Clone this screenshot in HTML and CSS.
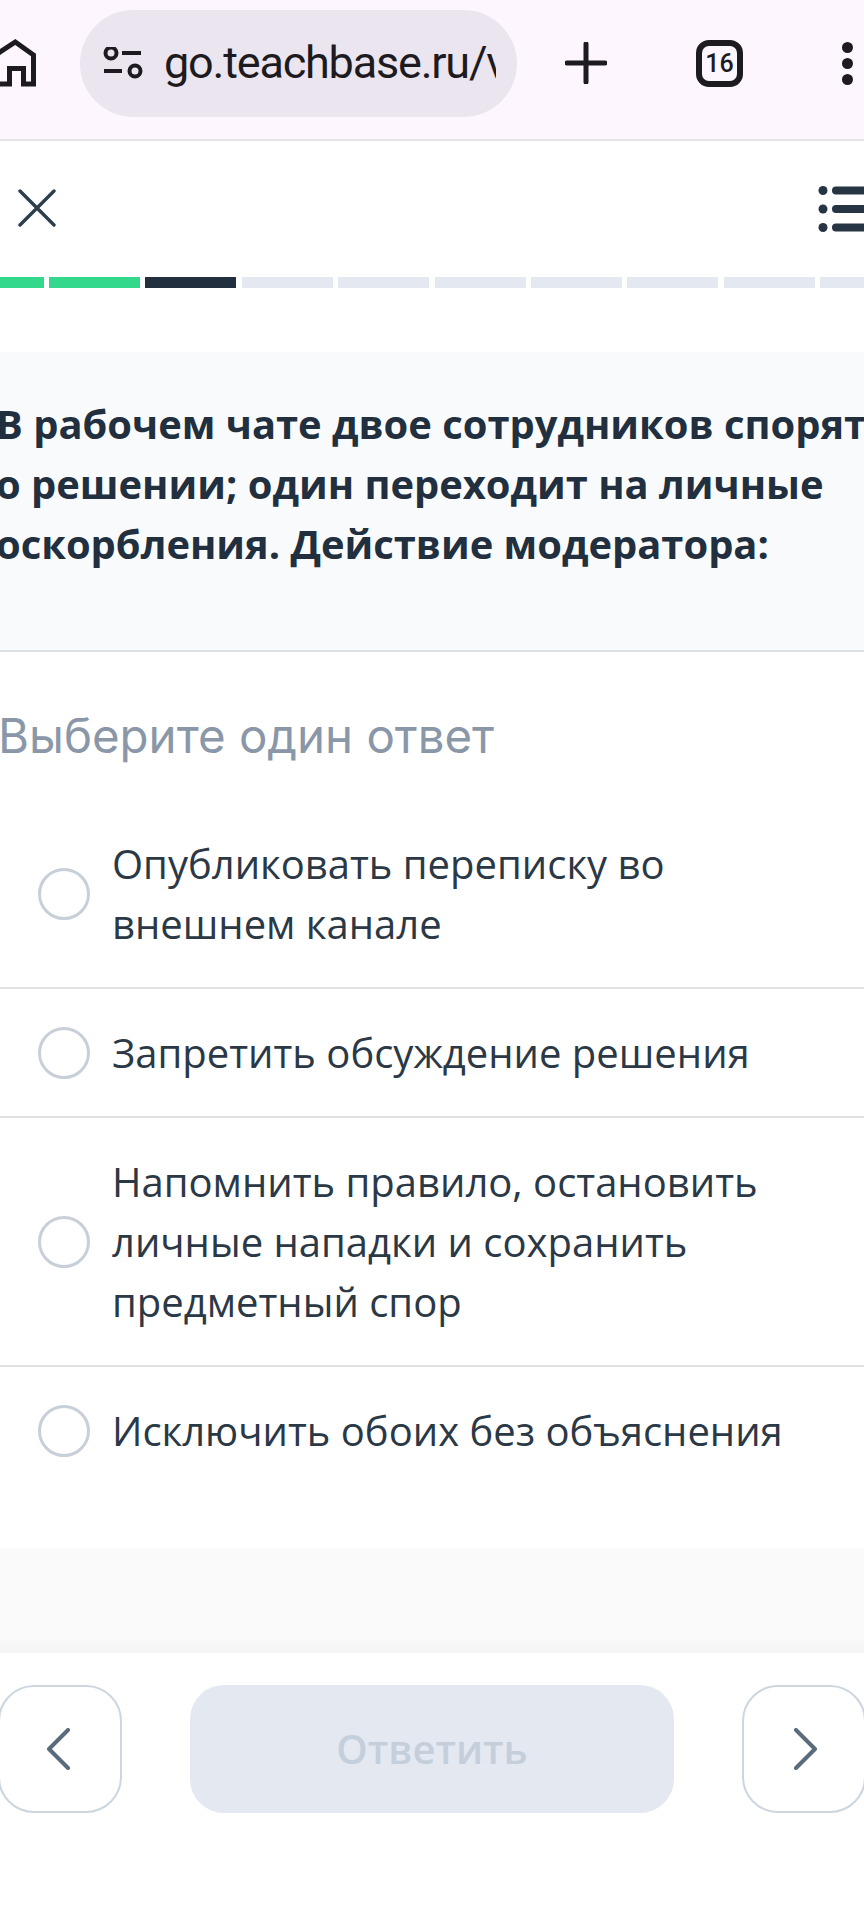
FILE: index.html
```html
<!DOCTYPE html>
<html lang="ru">
<head>
<meta charset="utf-8">
<title>Teachbase</title>
<link rel="stylesheet" href="styles.css">
</head>
<body>
<div class="page">
  <header class="browser-bar">
    <svg class="home" viewBox="0 0 37 50" width="37" height="50"><path d="M-6 18 L15.300 4 L33.500 17 V46 H23.500 V30.500 H9.500 V46 H-6 Z" fill="none" stroke="#1d1b20" stroke-width="5"/></svg>
    <div class="pill">
      <svg class="tune" viewBox="0 0 44 32" width="44" height="32"><g fill="none" stroke="#1d1b20" stroke-width="4"><circle cx="8" cy="6" r="5.500"/><circle cx="32" cy="24" r="5.500"/><path d="M19 6H38M1 24H19"/></g></svg>
      <div class="url">go.teachbase.ru/v</div>
    </div>
    <svg class="plus" viewBox="0 0 42 42" width="42" height="42"><path d="M21 2V40M2 21H40" stroke="#1d1b20" stroke-width="5" stroke-linecap="round"/></svg>
    <div class="tabs">16</div>
    <div class="dots"><i></i><i></i><i></i></div>
  </header>

  <div class="topbar">
    <svg class="close" viewBox="0 0 38 38" width="38" height="38"><path d="M2 2L36 36M36 2L2 36" stroke="#2c3e4c" stroke-width="3.400" stroke-linecap="round"/></svg>
    <svg class="list" viewBox="0 0 46 46" width="46" height="46"><g fill="#273444"><circle cx="5" cy="4.500" r="4.500"/><circle cx="5" cy="23" r="4.500"/><circle cx="5" cy="41.500" r="4.500"/><rect x="14" y="0.500" width="40" height="8" rx="4"/><rect x="14" y="19" width="40" height="8" rx="4"/><rect x="14" y="37.500" width="40" height="8" rx="4"/></g></svg>
  </div>

  <div class="progress">
    <span class="seg done"></span><span class="seg done"></span><span class="seg current"></span><span class="seg"></span><span class="seg"></span><span class="seg"></span><span class="seg"></span><span class="seg"></span><span class="seg"></span><span class="seg"></span>
  </div>

  <section class="question">
    <p class="question-text">В рабочем чате двое сотрудников спорят<br>о решении; один переходит на личные<br>оскорбления. Действие модератора:</p>
  </section>

  <h2 class="hint">Выберите один ответ</h2>

  <ul class="options">
    <li class="option"><span class="radio"></span><span class="label">Опубликовать переписку во<br>внешнем канале</span></li>
    <li class="option"><span class="radio"></span><span class="label">Запретить обсуждение решения</span></li>
    <li class="option"><span class="radio"></span><span class="label">Напомнить правило, остановить<br>личные нападки и сохранить<br>предметный спор</span></li>
    <li class="option"><span class="radio"></span><span class="label">Исключить обоих без объяснения</span></li>
  </ul>

  <div class="spacer"></div>

  <footer class="footer">
    <button class="nav prev"><svg viewBox="0 0 24 42" width="24" height="42"><path d="M22 2L3 21L22 40" fill="none" stroke="#5a6b7c" stroke-width="4" stroke-linecap="round" stroke-linejoin="round"/></svg></button>
    <button class="answer">Ответить</button>
    <button class="nav next"><svg viewBox="0 0 24 42" width="24" height="42"><path d="M2 2L21 21L2 40" fill="none" stroke="#5a6b7c" stroke-width="4" stroke-linecap="round" stroke-linejoin="round"/></svg></button>
  </footer>
</div>
</body>
</html>
```
FILE: styles.css
```css
* { box-sizing: border-box; }
html, body { margin: 0; padding: 0; background: #fff; }
.page { width: 864px; height: 1920px; overflow: hidden; font-family: "Open Sans", sans-serif; color: #273444; }

.browser-bar { height: 141px; padding-bottom: 13px; display: flex; align-items: center; background: #fdf6fe; border-bottom: 2px solid #e6e3e8; }
.home { flex: none; margin-right: 43px; }
.pill { flex: none; width: 437px; height: 107px; border-radius: 54px; background: #ebe5f0; display: flex; align-items: center; padding-left: 23px; }
.tune { flex: none; }
.url { margin-left: 17px; width: 332px; overflow: hidden; white-space: nowrap; font: 400 45px/60px Roboto, sans-serif; color: #1d1b20; letter-spacing: -1.2px; }
.plus { flex: none; margin-left: 48px; }
.tabs { flex: none; margin-left: 89px; width: 47px; height: 47px; border: 6px solid #1d1b20; border-radius: 13px; display: flex; align-items: center; justify-content: center; font: 500 25px/1 Roboto, sans-serif; color: #1d1b20; }
.dots { flex: none; margin-left: 99px; display: flex; flex-direction: column; gap: 5px; }
.dots i { display: block; width: 11px; height: 11px; border-radius: 50%; background: #1d1b20; }

.topbar { height: 136px; display: flex; align-items: center; justify-content: space-between; }
.close { margin: 0 0 2px 18px; }
.progress { display: flex; gap: 5.4px; height: 11px; margin-left: -47.4px; width: 960px; }
.seg { flex: none; width: 91px; background: #e4e8f1; }
.seg.done { background: #34d88c; }
.seg.current { background: #212f3e; }

.question { margin-top: 64px; height: 300px; background: #f8fafc; border-bottom: 2px solid #dcdfe3; padding-top: 42px; }
.question-text { margin: 0 0 0 -4px; font-size: 39.9px; line-height: 60px; font-weight: 700; color: #212f3e; white-space: nowrap; }

.hint { margin: 54px 0 0 -2px; font: 400 47.4px/60px Inter, sans-serif; color: #8a97a8; }

.options { list-style: none; margin: 34px 0 0; padding: 0; }
.option { display: flex; align-items: center; gap: 22px; padding: 34px 0 33px 38px; border-bottom: 2px solid #e0e1e4; }
.option:last-child { border-bottom: 0; }
.radio { flex: none; width: 52px; height: 52px; border-radius: 50%; border: 3px solid #c8cfd9; background: #fff; }
.label { font-size: 40px; line-height: 60px; color: #2b3846; white-space: nowrap; }

.spacer { margin-top: 54px; height: 105px; background: linear-gradient(#fafafa 0, #fafafa 85%, #f4f4f4 100%); }

.footer { display: flex; align-items: center; gap: 68px; padding-top: 32px; margin-left: -2px; width: 960px; }
.nav { flex: none; width: 124px; height: 128px; padding: 0; background: #fff; border: 2.5px solid #cdd6de; border-radius: 36px; display: flex; align-items: center; justify-content: center; }
.prev { padding-right: 4px; }
.next { padding-left: 4px; }
.answer { flex: none; width: 484px; height: 128px; border: 0; border-radius: 34px; background: #e4e8f1; color: #c5cfdb; font: 600 40px/1 "Open Sans", sans-serif; }
```
